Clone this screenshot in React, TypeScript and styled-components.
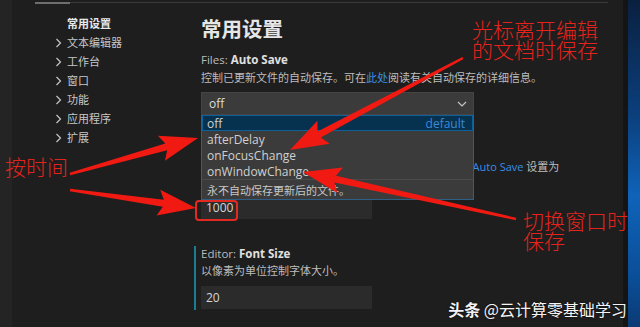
import styled, { createGlobalStyle } from "styled-components";

const GlobalStyle = createGlobalStyle`
    html, body {
        margin: 0;
        padding: 0;
        background: #1e1e1e;
    }
    body {
        font-family: "Open Sans", "Noto Sans CJK SC", sans-serif;
    }
`;

const Page = styled.div`
    position: relative;
    display: flex;
    width: 640px;
    height: 327px;
    overflow: hidden;
    background: #1e1e1e;
    color: #cccccc;
`;
const LeftStrip = styled.div`
    width: 12px;
    background: #242425;
`;
const Workspace = styled.div`
    display: flex;
    flex-direction: column;
    flex: 1;
`;
const TopRule = styled.div`
    display: flex;
    height: 4px;
    margin-right: 15px;
    border-top: 2px solid transparent;
    box-sizing: border-box;
`;
const RuleLine = styled.div`
    flex: 1;
    height: 1px;
    background: #3a3a3a;
`;
const Thumb = styled.div`
    width: 35px;
    height: 2px;
    margin-left: 23px;
    background: #6e6e6e;
`;
const Body = styled.div`
    display: flex;
    flex: 1;
`;
const Sidebar = styled.nav`
    width: 189px;
    padding: 10px 0 0 43px;
    box-sizing: border-box;
`;
const NavTitle = styled.div`
    padding-left: 12px;
    font-size: 11px;
    line-height: 19px;
    font-weight: 700;
    color: #e8e8e8;
`;
const NavItem = styled.div`
    display: flex;
    align-items: center;
    gap: 5px;
    font-size: 11px;
    line-height: 19px;
    color: #c8c8c8;
`;
const Main = styled.main`
    flex: 1;
    padding: 10px 0 0 0;
`;
const Heading = styled.h1`
    margin: 0;
    font-size: 20.5px;
    line-height: 30px;
    font-weight: 700;
    color: #e6e6e6;
`;
const Section = styled.section<{ $gap: number }>`
    margin-top: ${(p) => p.$gap}px;
`;
const Bordered = styled.section`
    margin: 27px 0 0 -7px;
    padding: 0 0 1px 5px;
    border-left: 2px solid #1b7d95;
`;
const Title = styled.div<{ $lh?: number }>`
    font-size: 11.5px;
    line-height: ${(p) => p.$lh ?? 18}px;
    color: #bbbbbb;
    b {
        color: #e0e0e0;
    }
`;
const Desc = styled.div`
    font-size: 11px;
    line-height: 18px;
    color: #bdbdbd;
    white-space: nowrap;
`;
const Link = styled.span`
    color: #3a8ee6;
`;
const SelectWrap = styled.div`
    position: relative;
    width: 273px;
    margin-top: 5px;
`;
const SelectBox = styled.div`
    display: flex;
    align-items: center;
    justify-content: space-between;
    height: 23px;
    padding: 0 6px 0 7px;
    box-sizing: border-box;
    background: #3b3b3b;
    border: 1px solid #454545;
    font-size: 12px;
    color: #dcdcdc;
`;
const Dropdown = styled.div`
    position: absolute;
    top: 23px;
    left: 0;
    right: 0;
    height: 85px;
    background: #3b3b3b;
    border: 1px solid #2e5f86;
    border-top: none;
    box-sizing: border-box;
    z-index: 2;
`;
const Option = styled.div<{ $active?: boolean }>`
    display: flex;
    justify-content: space-between;
    height: 16px;
    padding: 0 7px 0 4px;
    box-sizing: border-box;
    font-size: 12px;
    line-height: 15px;
    color: #d0d0d0;
    background: ${(p) => (p.$active ? "#07324f" : "transparent")};
    border: 1px solid ${(p) => (p.$active ? "#0e5f97" : "transparent")};
`;
const DefaultTag = styled.span`
    color: #3c8ad8;
`;
const OptionNote = styled.div`
    padding: 3px 0 0 5px;
    border-top: 1px solid #4a4a4a;
    font-size: 11px;
    line-height: 16px;
    color: #c8c8c8;
`;
const Input = styled.div<{ $top: number }>`
    width: 171px;
    height: 23px;
    margin-top: ${(p) => p.$top}px;
    padding-left: 5px;
    box-sizing: border-box;
    background: #2b2b2b;
    font-size: 12px;
    line-height: 23px;
    color: #d6d6d6;
`;
const EdgeShade = styled.div`
    width: 5px;
    background: #141414;
`;
const Desktop = styled.div`
    width: 12px;
    background: linear-gradient(180deg, #0a2040 0%, #0b3f7c 35%, #0f63b9 60%, #0a4e98 85%, #0b3a74 100%);
`;
const Overlay = styled.svg`
    position: absolute;
    left: 0;
    top: 0;
    pointer-events: none;
    z-index: 5;
`;
const Note = styled.div<{ $x: number; $y: number }>`
    position: absolute;
    left: ${(p) => p.$x}px;
    top: ${(p) => p.$y}px;
    font-family: "Noto Sans CJK SC", sans-serif;
    font-size: 21px;
    font-weight: 300;
    line-height: 20px;
    color: #e4241c;
    white-space: pre;
    z-index: 6;
`;
const Marker = styled.div`
    position: absolute;
    left: 195px;
    top: 200px;
    width: 43px;
    height: 21px;
    border: 2px solid #e32a22;
    border-radius: 4px;
    box-sizing: border-box;
    z-index: 6;
`;
const Watermark = styled.div`
    position: absolute;
    right: 13px;
    bottom: 8px;
    font-family: "Noto Sans CJK SC", sans-serif;
    font-size: 16px;
    line-height: 20px;
    color: #f4f4f4;
    text-shadow: 0 0 2px rgba(0, 0, 0, 0.8);
    z-index: 7;
    b {
        font-weight: 700;
    }
`;

const Chevron = () => (
    <svg width="7" height="10" viewBox="0 0 7 10">
        <polyline points="1.5,1 5.5,5 1.5,9" fill="none" stroke="#c5c5c5" strokeWidth="1.2" />
    </svg>
);

const DownCaret = () => (
    <svg width="10" height="6" viewBox="0 0 10 6">
        <polyline points="1,1 5,5 9,1" fill="none" stroke="#c5c5c5" strokeWidth="1.2" />
    </svg>
);

// tapered red arrow from tail to tip
const arrowPoints = (x0: number, y0: number, x1: number, y1: number) => {
    const dx = x1 - x0;
    const dy = y1 - y0;
    const len = Math.hypot(dx, dy);
    const ux = dx / len;
    const uy = dy / len;
    const nx = -uy;
    const ny = ux;
    const headLen = 33;
    const bx = x1 - ux * headLen;
    const by = y1 - uy * headLen;
    const pts = [
        [x0 + nx * 1.2, y0 + ny * 1.2],
        [bx + nx * 3.5, by + ny * 3.5],
        [bx - ux * 5 + nx * 13, by - uy * 5 + ny * 13],
        [x1, y1],
        [bx - ux * 5 - nx * 13, by - uy * 5 - ny * 13],
        [bx - nx * 3.5, by - ny * 3.5],
        [x0 - nx * 1.2, y0 - ny * 1.2],
    ];
    return pts.map((p) => p.join(",")).join(" ");
};

const arrows = [
    [463, 58, 290, 150],
    [70, 174, 198, 138],
    [70, 190, 196, 208],
    [516, 219, 303, 172],
];

const navItems = ["文本编辑器", "工作台", "窗口", "功能", "应用程序", "扩展"];

const App = () => {
    return (
        <Page>
            <GlobalStyle />
            <LeftStrip />
            <Workspace>
                <TopRule>
                    <Thumb />
                    <RuleLine />
                </TopRule>
                <Body>
                    <Sidebar>
                        <NavTitle>常用设置</NavTitle>
                        {navItems.map((item) => (
                            <NavItem key={item}>
                                <Chevron />
                                {item}
                            </NavItem>
                        ))}
                    </Sidebar>
                    <Main>
                        <Heading>常用设置</Heading>
                        <Section $gap={7}>
                            <Title>
                                Files: <b>Auto Save</b>
                            </Title>
                            <Desc>
                                控制已更新文件的自动保存。可在<Link>此处</Link>阅读有关自动保存的详细信息。
                            </Desc>
                            <SelectWrap>
                                <SelectBox>
                                    off
                                    <DownCaret />
                                </SelectBox>
                                <Dropdown>
                                    <Option $active>
                                        off<DefaultTag>default</DefaultTag>
                                    </Option>
                                    <Option>afterDelay</Option>
                                    <Option>onFocusChange</Option>
                                    <Option>onWindowChange</Option>
                                    <OptionNote>永不自动保存更新后的文件。</OptionNote>
                                </Dropdown>
                            </SelectWrap>
                        </Section>
                        <Section $gap={43}>
                            <Desc>
                                控制自动保存已更新文件的延迟时间 (毫秒)。仅在 <Link>Files: Auto Save</Link> 设置为
                            </Desc>
                            <Input $top={20}>1000</Input>
                        </Section>
                        <Bordered>
                            <Title $lh={16}>
                                Editor: <b>Font Size</b>
                            </Title>
                            <Desc>以像素为单位控制字体大小。</Desc>
                            <Input $top={6}>20</Input>
                        </Bordered>
                    </Main>
                </Body>
            </Workspace>
            <EdgeShade />
            <Desktop />

            <Overlay width="640" height="327" viewBox="0 0 640 327">
                {arrows.map(([a, b, c, d], i) => (
                    <polygon key={i} points={arrowPoints(a, b, c, d)} fill="#f01a12" />
                ))}
            </Overlay>
            <Marker />
            <Note $x={472} $y={19}>{"光标离开编辑\n的文档时保存"}</Note>
            <Note $x={5} $y={156}>按时间</Note>
            <Note $x={523} $y={210}>{"切换窗口时\n保存"}</Note>
            <Watermark>
                <b>头条</b> @云计算零基础学习
            </Watermark>
        </Page>
    );
};

export default App;
